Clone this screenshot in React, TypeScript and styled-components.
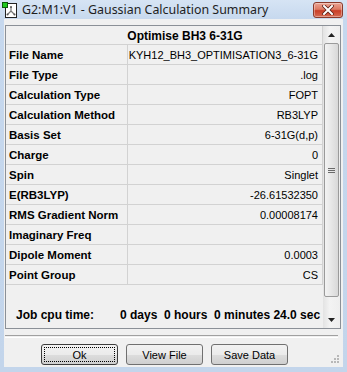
import styled, { createGlobalStyle } from "styled-components";

const GlobalStyle = createGlobalStyle`
  html, body {
    margin: 0;
    padding: 0;
  }
  body {
    width: 347px;
    height: 372px;
    overflow: hidden;
    font-family: "Liberation Sans", Arial, sans-serif;
  }
`;

const Window = styled.div`
  width: 347px;
  height: 372px;
  box-sizing: border-box;
  display: flex;
  flex-direction: column;
  background: linear-gradient(#d6e4f4, #c6d8ee 20px, #c3d5eb);
  padding: 0 4px 5px 4px;
`;

const TitleBar = styled.div`
  height: 20px;
  display: flex;
  align-items: flex-start;
  margin-left: -2px;
`;

const AppIcon = styled.svg`
  width: 16px;
  height: 16px;
  margin-top: 2px;
  flex: none;
`;

const Title = styled.span`
  margin-left: 4px;
  margin-top: 2px;
  font-family: "Noto Sans", "Open Sans", sans-serif;
  font-size: 12.4px;
  line-height: 16px;
  color: #1e1e1e;
`;

const CloseButton = styled.div`
  margin-left: auto;
  margin-top: 2px;
  width: 30px;
  height: 16px;
  box-sizing: border-box;
  border: 1px solid #8a3a2c;
  border-radius: 3px;
  background: linear-gradient(#eba494, #dd7a63 45%, #c93e27 55%, #d66a52);
  box-shadow: inset 0 0 0 1px rgba(255, 255, 255, 0.35);
  display: flex;
  align-items: center;
  justify-content: center;
`;

const Client = styled.div`
  flex: 1;
  background: #f0f0f0;
  display: flex;
  flex-direction: column;
  padding: 6px 2px 2px 1px;
`;

const Panel = styled.div`
  height: 304px;
  box-sizing: border-box;
  border: 1px solid #8b9097;
  display: flex;
  background: #f0f0f0;
`;

const Sheet = styled.div`
  width: 317px;
  display: flex;
  flex-direction: column;
`;

const HeaderCell = styled.div`
  height: 19px;
  box-sizing: border-box;
  border-bottom: 1px solid #d2d2d2;
  border-right: 1px solid #d2d2d2;
  display: flex;
  align-items: center;
  justify-content: center;
  font-weight: bold;
  font-size: 12px;
  padding: 1px 0 0 42px;
`;

const Row = styled.div`
  height: 20px;
  box-sizing: border-box;
  display: grid;
  grid-template-columns: 122px 195px;
  border-bottom: 1px solid #d2d2d2;
`;

const Cell = styled.div<{ $label?: boolean }>`
  border-right: 1px solid #d2d2d2;
  display: flex;
  align-items: center;
  justify-content: ${(p) => (p.$label ? "flex-start" : "flex-end")};
  padding: 0 ${(p) => (p.$label ? "0 0 3px" : "4px 0 0")};
  font-size: ${(p) => (p.$label ? "11.5px" : "11px")};
  font-weight: ${(p) => (p.$label ? "bold" : "normal")};
  color: #000;
  white-space: nowrap;
  overflow: hidden;
`;

const JobRow = styled.div`
  flex: 1;
  display: flex;
  align-items: flex-end;
  padding: 0 0 6px 10px;
  font-weight: bold;
  font-size: 12px;
  white-space: nowrap;
  overflow: hidden;
`;

const JobLabel = styled.span`
  width: 104px;
  flex: none;
`;

const Scrollbar = styled.div`
  width: 17px;
  display: flex;
  flex-direction: column;
  background: linear-gradient(90deg, #e3e3e3, #f3f3f3 40%, #eeeeee);
`;

const Arrow = styled.div`
  height: 17px;
  display: flex;
  align-items: center;
  justify-content: center;
`;

const Track = styled.div`
  flex: 1;
  display: flex;
  flex-direction: column;
`;

const Thumb = styled.div`
  height: 254px;
  margin: 0 1px;
  box-sizing: border-box;
  border: 1px solid #9a9a9a;
  border-radius: 2px;
  background: linear-gradient(90deg, #f3f3f3, #e6e6e6 50%, #d8d8d8);
  display: flex;
  align-items: center;
  justify-content: center;
`;

const Separator = styled.div`
  margin-top: 6px;
  height: 1px;
  border-top: 1px solid #a0a0a0;
  border-bottom: 1px solid #ffffff;
  margin-right: 3px;
`;

const ButtonRow = styled.div`
  margin-top: 6px;
  display: flex;
  gap: 8px;
  padding-left: 36px;
  position: relative;
  flex: 1;
`;

const Button = styled.div<{ $default?: boolean }>`
  width: 77px;
  height: 21px;
  box-sizing: border-box;
  border: 1px solid ${(p) => (p.$default ? "#3c3c3c" : "#707070")};
  border-radius: 3px;
  background: linear-gradient(#f2f2f2, #ebebeb 50%, #dddddd 51%, #cfcfcf);
  display: flex;
  align-items: center;
  justify-content: center;
  font-size: 11px;
  color: #000;
  position: relative;
  &::after {
    content: "";
    display: ${(p) => (p.$default ? "block" : "none")};
    position: absolute;
    inset: 2px;
    border: 1px dotted #000;
  }
`;

const Grip = styled.svg`
  position: absolute;
  right: 1px;
  bottom: 1px;
`;

const rows: [string, string][] = [
  ["File Name", "KYH12_BH3_OPTIMISATION3_6-31G"],
  ["File Type", ".log"],
  ["Calculation Type", "FOPT"],
  ["Calculation Method", "RB3LYP"],
  ["Basis Set", "6-31G(d,p)"],
  ["Charge", "0"],
  ["Spin", "Singlet"],
  ["E(RB3LYP)", "-26.61532350"],
  ["RMS Gradient Norm", "0.00008174"],
  ["Imaginary Freq", ""],
  ["Dipole Moment", "0.0003"],
  ["Point Group", "CS"],
];

export default function App() {
  return (
    <>
      <GlobalStyle />
      <Window>
        <TitleBar>
          <AppIcon viewBox="0 0 16 16">
            <rect x="3.5" y="1.5" width="11" height="14" fill="#fff" stroke="#222" />
            <path d="M9 5 L9 9 M9 9 L5.5 12.5 M9 9 L12.5 12.5" stroke="#777" strokeWidth="1.2" fill="none" />
            <circle cx="9" cy="5" r="1" fill="#555" />
            <circle cx="5.5" cy="12.5" r="1" fill="#555" />
            <circle cx="12.5" cy="12.5" r="1" fill="#555" />
            <rect x="0.5" y="0.5" width="5" height="5" fill="#1ec81e" stroke="#0a5a0a" />
          </AppIcon>
          <Title>G2:M1:V1 - Gaussian Calculation Summary</Title>
          <CloseButton>
            <svg width="12" height="10" viewBox="0 0 12 10">
              <path d="M2 1 L10 9 M10 1 L2 9" stroke="#5a2018" strokeWidth="3.6" strokeLinecap="square" />
              <path d="M2 1 L10 9 M10 1 L2 9" stroke="#fff" strokeWidth="2" strokeLinecap="square" />
            </svg>
          </CloseButton>
        </TitleBar>
        <Client>
          <Panel>
            <Sheet>
              <HeaderCell>Optimise BH3 6-31G</HeaderCell>
              {rows.map(([label, value]) => (
                <Row key={label}>
                  <Cell $label>{label}</Cell>
                  <Cell>{value}</Cell>
                </Row>
              ))}
              <JobRow>
                <JobLabel>Job cpu time:</JobLabel>
                <span>0 days&nbsp; 0 hours&nbsp; 0 minutes 24.0 sec</span>
              </JobRow>
            </Sheet>
            <Scrollbar>
              <Arrow>
                <svg width="7" height="4" viewBox="0 0 7 4">
                  <path d="M3.5 0 L7 4 L0 4 Z" fill="#222" />
                </svg>
              </Arrow>
              <Track>
                <Thumb>
                  <svg width="7" height="7" viewBox="0 0 7 7">
                    <path d="M0 1.5 H7 M0 3.5 H7 M0 5.5 H7" stroke="#6a6a6a" strokeWidth="1" />
                  </svg>
                </Thumb>
              </Track>
              <Arrow>
                <svg width="7" height="4" viewBox="0 0 7 4">
                  <path d="M0 0 L7 0 L3.5 4 Z" fill="#222" />
                </svg>
              </Arrow>
            </Scrollbar>
          </Panel>
          <Separator />
          <ButtonRow>
            <Button $default>Ok</Button>
            <Button>View File</Button>
            <Button>Save Data</Button>
            <Grip width="10" height="10" viewBox="0 0 10 10">
              <g fill="#b8b8b8">
                <rect x="7" y="1" width="2" height="2" />
                <rect x="4" y="4" width="2" height="2" />
                <rect x="7" y="4" width="2" height="2" />
                <rect x="1" y="7" width="2" height="2" />
                <rect x="4" y="7" width="2" height="2" />
                <rect x="7" y="7" width="2" height="2" />
              </g>
            </Grip>
          </ButtonRow>
        </Client>
      </Window>
    </>
  );
}
